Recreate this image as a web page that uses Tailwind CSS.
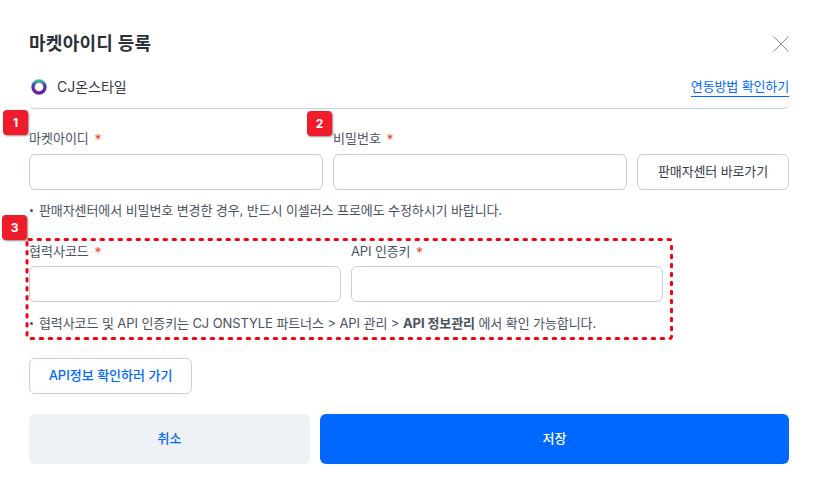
<!DOCTYPE html>
<html lang="ko">
  <head>
    <meta charset="UTF-8" />
    <meta name="viewport" content="width=device-width, initial-scale=1.0" />
    <title>마켓아이디 등록</title>
    <script src="https://cdn.jsdelivr.net/npm/@tailwindcss/browser@4"></script>
  </head>
  <body class="bg-white text-[#333b4a] font-['Inter','Noto_Sans_CJK_KR',sans-serif]">
    <div class="relative w-[815px] h-[483px] overflow-hidden pl-[29px] pr-[26px] pt-[30px]">
      <!-- header -->
      <div class="flex items-center justify-between h-[28px]">
        <h1 class="text-[18px] tracking-[0.015em] leading-[28px] font-bold text-[#2b313b]">마켓아이디 등록</h1>
        <button class="w-[16px] h-[16px] text-[#8c8c8c]">
          <svg width="16" height="16" viewBox="0 0 16 16" fill="none" stroke="currentColor" stroke-width="1"><path d="M0.5 0.5L15.5 15.5M15.5 0.5L0.5 15.5" /></svg>
        </button>
      </div>

      <div class="mt-[15px] h-[36px] flex items-start justify-between border-b border-[#c5d0e2] rounded-b-[6px]">
        <div class="flex items-center h-[28px] pl-[2px]">
          <svg width="16" height="16" viewBox="0 0 16 16" fill="none">
            <defs>
              <linearGradient id="cjRing" x1="0" y1="0" x2="0" y2="1">
                <stop offset="0" stop-color="#3fb5a0" />
                <stop offset="0.35" stop-color="#4a3fa8" />
                <stop offset="1" stop-color="#6a1fa8" />
              </linearGradient>
            </defs>
            <circle cx="8" cy="8" r="6" stroke="url(#cjRing)" stroke-width="3.4" />
          </svg>
          <span class="ml-[10px] text-[14px] leading-[28px] text-[#333b4a]">CJ온스타일</span>
        </div>
        <a href="#" class="mt-[4px] text-[13px] leading-[19px] tracking-[-0.01em] text-[#0068ff] border-b border-[#0068ff]">연동방법 확인하기</a>
      </div>

      <!-- market id -->
      <div class="mt-[19px] flex gap-[10px] items-end">
        <div class="w-[294px]">
          <label class="block h-[26px] text-[13px] leading-[20px] text-[#4a5261]">마켓아이디 <span class="text-[14px] align-[-2px] text-[#f0452e] ml-[2px]">*</span></label>
          <input class="block w-full h-[36px] rounded-[6px] border border-[#c5d0e2] bg-white" />
        </div>
        <div class="w-[294px]">
          <label class="block h-[26px] text-[13px] leading-[20px] text-[#4a5261]">비밀번호 <span class="text-[14px] align-[-2px] text-[#f0452e] ml-[2px]">*</span></label>
          <input class="block w-full h-[36px] rounded-[6px] border border-[#c5d0e2] bg-white" />
        </div>
        <button class="w-[152px] h-[36px] rounded-[6px] border border-[#c5d0e2] bg-white text-[13px] tracking-[-0.01em] text-[#333b4a]">판매자센터 바로가기</button>
      </div>
      <p class="mt-[11px] flex items-center text-[13px] leading-[18px] tracking-[-0.007em] text-[#4a5261]"><span class="w-[3px] h-[3px] rounded-full bg-[#4a5261] ml-[1px] mr-[6px]"></span>판매자센터에서 비밀번호 변경한 경우, 반드시 이셀러스 프로에도 수정하시기 바랍니다.</p>

      <!-- api info -->
      <div class="mt-[20px] w-[634px]">
        <div class="flex gap-[10px]">
          <div class="w-[312px]">
            <label class="block h-[27px] pt-[2px] text-[13px] leading-[20px] text-[#4a5261]">협력사코드 <span class="text-[14px] align-[-2px] text-[#f0452e] ml-[2px]">*</span></label>
            <input class="block w-full h-[36px] rounded-[6px] border border-[#c5d0e2] bg-white" />
          </div>
          <div class="w-[312px]">
            <label class="block h-[27px] pt-[2px] text-[13px] leading-[20px] tracking-[-0.01em] text-[#4a5261]">API 인증키 <span class="text-[14px] align-[-2px] text-[#f0452e] ml-[2px]">*</span></label>
            <input class="block w-full h-[36px] rounded-[6px] border border-[#c5d0e2] bg-white" />
          </div>
        </div>
        <p class="mt-[12px] flex items-center whitespace-nowrap text-[13px] leading-[18px] tracking-[-0.007em] text-[#4a5261]"><span class="w-[3px] h-[3px] rounded-full bg-[#4a5261] ml-[1px] mr-[6px]"></span><span>협력사코드 및 API 인증키는 CJ ONSTYLE 파트너스 &gt; API 관리 &gt; <b class="font-bold">API 정보관리</b> 에서 확인 가능합니다.</span></p>
      </div>

      <button class="mt-[26px] block w-[163px] h-[36px] rounded-[6px] border border-[#c5d0e2] bg-white text-[13px] font-medium text-[#0068ff]">API정보 확인하러 가기</button>

      <div class="mt-[20px] flex gap-[10px]">
        <button class="w-[281px] h-[50px] rounded-[6px] bg-[#eef1f5] text-[13px] font-medium text-[#0068ff]">취소</button>
        <button class="w-[469px] h-[50px] rounded-[6px] bg-[#0068ff] text-[13px] font-medium text-white">저장</button>
      </div>

      <!-- annotations -->
      <svg class="absolute left-[24px] top-[236px]" width="652" height="106" fill="none">
        <rect x="3" y="3.5" width="644.5" height="99" rx="2" stroke="#f5000f" stroke-width="3" stroke-linecap="round" stroke-dasharray="2.5 6.5" />
      </svg>
      <span class="absolute left-[3px] top-[110px] w-[25px] h-[25px] rounded-[4px] bg-[#ef1c2b] shadow-[1px_1px_2px_rgba(0,0,0,0.45)] flex items-center justify-center text-[12px] font-bold text-white">1</span>
      <span class="absolute left-[307px] top-[111px] w-[25px] h-[25px] rounded-[4px] bg-[#ef1c2b] shadow-[1px_1px_2px_rgba(0,0,0,0.45)] flex items-center justify-center text-[12px] font-bold text-white">2</span>
      <span class="absolute left-[2px] top-[215px] w-[25px] h-[25px] rounded-[4px] bg-[#ef1c2b] shadow-[1px_1px_2px_rgba(0,0,0,0.45)] flex items-center justify-center text-[12px] font-bold text-white">3</span>
    </div>
  </body>
</html>
